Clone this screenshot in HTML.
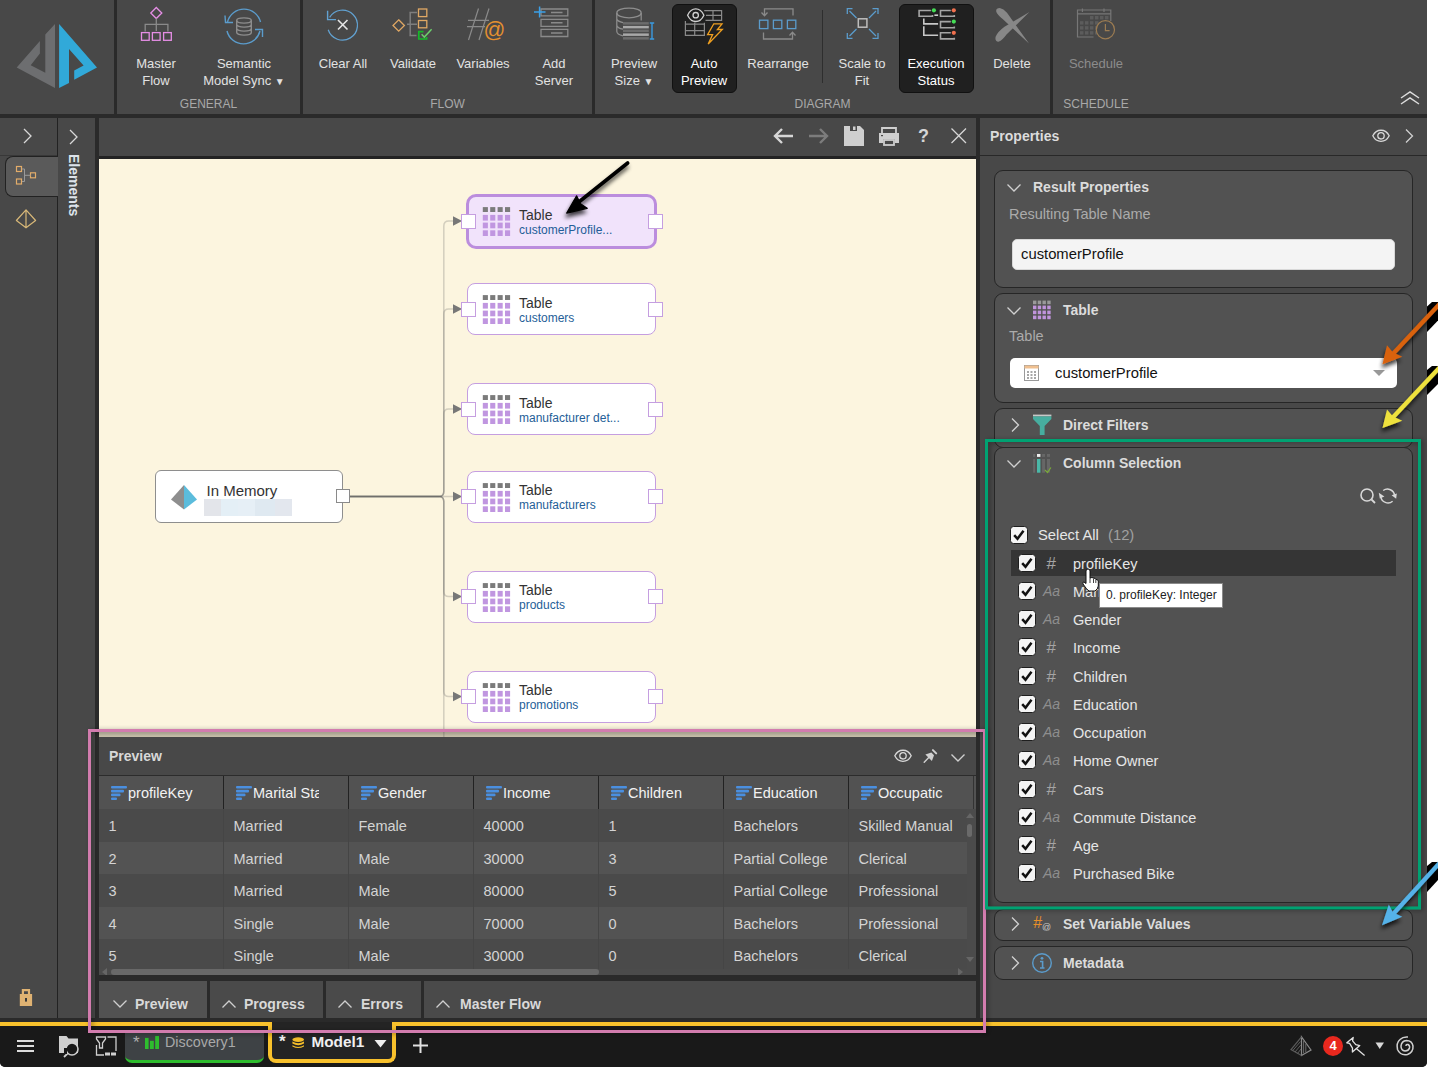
<!DOCTYPE html>
<html><head><meta charset="utf-8">
<style>
*{margin:0;padding:0;box-sizing:border-box}
html,body{width:1438px;height:1067px;overflow:hidden;background:#fff;font-family:"Liberation Sans",sans-serif}
.a{position:absolute}
svg{position:absolute;overflow:visible}
.rb{position:absolute;color:#e2e2e2;font-size:13px;line-height:17px;text-align:center;white-space:nowrap}
.gl{position:absolute;color:#a9a9a9;font-size:12px;line-height:14px;white-space:nowrap;text-align:center}
.box{position:absolute;left:994px;width:419px;background:#525252;border:1px solid #262626;border-radius:9px}
.bt{position:absolute;left:68px;font-weight:bold;font-size:14px;color:#dcdcdc;white-space:nowrap;line-height:16px}
.chev{position:absolute}
.cb{position:absolute;width:18px;height:18px;background:#f4f4f4;border-radius:3.5px;border:1px solid #1e1e1e}
.row{position:absolute;left:0;width:877px;height:33px}
.cell{position:absolute;font-size:14.5px;color:#d4d4d4;white-space:nowrap;line-height:18px}
.hc{position:absolute;font-size:14.5px;color:#f2f2f2;white-space:nowrap;line-height:18px}
.col{position:absolute;font-size:14.5px;color:#e6e6e6;white-space:nowrap;line-height:20px;left:1073px}
.ty{position:absolute;font-size:13px;color:#9a9a9a;white-space:nowrap;font-style:italic;left:1044px;line-height:16px}
.node{position:absolute;left:467px;width:189px;height:52px;background:#fff;border:1px solid #c59ee0;border-radius:8px}
.nt{position:absolute;left:52px;top:9px;font-size:14px;color:#333;line-height:16px;white-space:nowrap}
.ns{position:absolute;left:52px;top:24px;font-size:12px;color:#235f98;line-height:14px;white-space:nowrap}
.port{position:absolute;width:15px;height:15px;background:#fff;border:1px solid #c59ee0}
.tab{position:absolute;top:981px;height:37px;background:#4a4a4a;font-size:14px;font-weight:bold;color:#d9d9d9;line-height:46px;white-space:nowrap}
</style></head><body>
<!-- app frame -->
<div class="a" style="left:0;top:0;width:1427px;height:1067px;background:#2a2a2a;border-radius:0 0 5px 5px;overflow:hidden">
  <!-- ribbon -->
  <div class="a" style="left:0;top:0;width:1427px;height:114px;background:#484848"></div>
  <div class="a" style="left:114px;top:0;width:3px;height:114px;background:#2a2a2a"></div>
  <div class="a" style="left:300px;top:0;width:3px;height:114px;background:#2a2a2a"></div>
  <div class="a" style="left:592px;top:0;width:3px;height:114px;background:#2a2a2a"></div>
  <div class="a" style="left:1050px;top:0;width:3px;height:114px;background:#2a2a2a"></div>

  <!-- logo -->
  <svg width="120" height="114" style="left:0;top:0">
    <polygon points="55,24 45.3,34.5 45.3,72.8 30.7,65.2 39.9,53.4 39.9,41 16.7,67.6 55,88" fill="#6d6e70"/>
    <polygon points="59.1,24 97,67.6 74.2,79.8 74.2,70.6 83.6,65.4 69,49.1 69,83 59.1,88" fill="#31a9d9"/>
  </svg>
  <!-- Master Flow icon -->
  <svg width="40" height="45" style="left:136px;top:0">
    <g transform="translate(-136,0)">
    <polygon points="156.3,7.5 161.8,13 156.3,18.5 150.8,13" fill="none" stroke="#e68ee6" stroke-width="1.3"/>
    <path d="M156.3 18.5V31 M145.2 31.5V24.4H167.9V31.5" fill="none" stroke="#8a8a8a" stroke-width="1.3"/>
    <rect x="141.5" y="32.6" width="7.7" height="7.7" fill="none" stroke="#e68ee6" stroke-width="1.3"/>
    <rect x="152.4" y="32.6" width="7.7" height="7.7" fill="none" stroke="#e68ee6" stroke-width="1.3"/>
    <rect x="163.6" y="32.6" width="7.7" height="7.7" fill="none" stroke="#e68ee6" stroke-width="1.3"/>
    </g>
  </svg>
  <div class="rb" style="left:116px;width:80px;top:55px">Master<br>Flow</div>
  <!-- Semantic Model Sync icon -->
  <svg width="60" height="50" style="left:214px;top:0">
    <g transform="translate(-214,0)" fill="none" stroke-width="1.4">
    <path d="M227.5 22 A17 17 0 0 1 260.5 22" stroke="#5b9ccc"/>
    <path d="M260 31 A17 17 0 0 1 227 31" stroke="#5b9ccc"/>
    <path d="M225 15.5 L225.5 22.5 L233 22.5" stroke="#5b9ccc"/>
    <path d="M262.5 37 L262.5 29.5 L255 29.5" stroke="#5b9ccc"/>
    <ellipse cx="244" cy="20.5" rx="7.3" ry="2.6" stroke="#8d8d8d"/>
    <path d="M236.7 20.5V32.5 A7.3 2.6 0 0 0 251.3 32.5 V20.5 M236.7 24.5 A7.3 2.6 0 0 0 251.3 24.5 M236.7 28.5 A7.3 2.6 0 0 0 251.3 28.5" stroke="#8d8d8d"/>
    </g>
  </svg>
  <div class="rb" style="left:194px;width:100px;top:55px">Semantic<br>Model Sync <span style="font-size:10px">&#9660;</span></div>
  <div class="gl" style="left:117px;width:183px;top:97px">GENERAL</div>

  <!-- Clear All -->
  <svg width="40" height="45" style="left:322px;top:0">
    <g transform="translate(-322,0)" fill="none">
    <path d="M329.6 17.4 A15 15 0 1 1 328.2 29.8" stroke="#62a2d2" stroke-width="1.25"/>
    <path d="M327.6 10.8 V19.6 H336" stroke="#62a2d2" stroke-width="1.4"/>
    <path d="M338 20 L347.5 29.5 M347.5 20 L338 29.5" stroke="#e6e6e6" stroke-width="1.6"/>
    </g>
  </svg>
  <div class="rb" style="left:303px;width:80px;top:55px">Clear All</div>
  <!-- Validate -->
  <svg width="50" height="45" style="left:390px;top:0">
    <g transform="translate(-390,0)" fill="none" stroke-width="1.3">
    <polygon points="398.7,19.8 404.4,25.5 398.7,31.2 393,25.5" stroke="#e0a864"/>
    <path d="M407 24.2 H417 M410.2 12.5 V35.5 M409.4 12.5 H417 M409.4 35.5 H416.5" stroke="#7e7e7e" stroke-width="1.5"/>
    <rect x="418.5" y="9" width="8.3" height="7.6" stroke="#e0a864"/>
    <rect x="418.5" y="20.5" width="8.3" height="7.3" stroke="#e0a864"/>
    <path d="M423.5 31.6 H418.8 V39 H426.6 V37" stroke="#16b82a" stroke-width="1.7"/>
    <path d="M421.6 34.2 L424.3 37.1 L431.6 29.2" stroke="#6cd06c" stroke-width="1.4"/>
    </g>
  </svg>
  <div class="rb" style="left:373px;width:80px;top:55px">Validate</div>
  <!-- Variables -->
  <svg width="50" height="45" style="left:460px;top:0">
    <g transform="translate(-460,0)" fill="none">
    <path d="M478.5 8.5 L468.5 40 M489 8.5 L479 40 M468 20.4 H489 M467 26.6 H485" stroke="#8a8a8a" stroke-width="1.2"/>
</g>
  </svg>
  <div class="a" style="left:483.5px;top:17px;font-size:21.5px;color:#e39030;line-height:26px">@</div>
  <div class="rb" style="left:443px;width:80px;top:55px">Variables</div>
  <!-- Add Server -->
  <svg width="40" height="45" style="left:532px;top:0">
    <g transform="translate(-532,0)" fill="none" stroke-width="1.3">
    <path d="M541 9 H567.8 V15.8 H541 Z M541 19.3 H567.8 V26.3 H541 Z M541 29.3 H567.8 V36.5 H541 Z" stroke="#8a8a8a"/>
    <path d="M551 12.5 H562.5 M551 22.8 H562.5 M551 33 H562.5" stroke="#8a8a8a" stroke-width="1.6"/>
    <path d="M539.6 6.5 V17.5 M534 12 H545.5" stroke="#3aa0e8" stroke-width="1.5"/>
    </g>
  </svg>
  <div class="rb" style="left:514px;width:80px;top:55px">Add<br>Server</div>
  <div class="gl" style="left:303px;width:289px;top:97px">FLOW</div>

  <!-- Preview Size -->
  <svg width="50" height="45" style="left:612px;top:0">
    <g transform="translate(-612,0)" fill="none" stroke-width="1.25">
    <ellipse cx="629" cy="12.9" rx="12.2" ry="4.9" stroke="#8e8e8e"/>
    <path d="M616.8 12.9 V31.5 Q617 34.5 623 35.8 M616.8 19 Q617.5 21.5 623 22.6 M616.8 25.5 Q617.5 28 623 29.2 M641.2 12.9 V20.6" stroke="#8e8e8e"/>
    <rect x="623" y="22.1" width="25.8" height="2.5" fill="#6c6c6c" stroke="none"/>
    <rect x="623" y="25.9" width="25.8" height="2.5" fill="#a8a8a8" stroke="none"/>
    <rect x="623" y="29.6" width="25.8" height="2.5" fill="#6c6c6c" stroke="none"/>
    <rect x="623" y="33.4" width="25.8" height="2.5" fill="#a8a8a8" stroke="none"/>
    <rect x="623" y="37.1" width="25.8" height="2.5" fill="#6c6c6c" stroke="none"/>
    <path d="M652 23 V39 M649.8 23 H654.2 M649.8 39 H654.2" stroke="#3a9ae0" stroke-width="1.4"/>
    </g>
  </svg>
  <div class="rb" style="left:594px;width:80px;top:55px">Preview<br>Size <span style="font-size:10px">&#9660;</span></div>
  <!-- Auto Preview (active) -->
  <div class="a" style="left:672px;top:4px;width:65px;height:89px;background:#202020;border:1px solid #111;border-radius:6px"></div>
<svg width="50" height="48" style="left:680px;top:0">
    <g transform="translate(-680,0)" fill="none" stroke-width="1.2">
    <path d="M704.2 10.6 H721.6 V20.3 H705.5 M713 10.6 V20.3 M706 15.4 H721.6" stroke="#8a8a8a"/>
    <path d="M685.4 21 V35.4 H704.4 V22.8 M685.4 24.2 H704.4 M685.4 30.6 H704.4 M694.7 22.5 V35.4" stroke="#8a8a8a"/>
    <path d="M687.6 15.2 C691.5 6.8 700 6.8 703.9 15.2 C700 23.6 691.5 23.6 687.6 15.2 Z" stroke="#d2d2d2" stroke-width="1.3" fill="#202020"/>
    <circle cx="695.7" cy="15.2" r="2.7" stroke="#d2d2d2" stroke-width="1.3"/>
    <path d="M713.8 23.8 H722 L717.4 29.5 H722.3 L708.2 44 L712.6 34.6 H707.6 Z" stroke="#f0a020" stroke-width="1.3" stroke-linejoin="miter"/>
    </g>
  </svg>
  <div class="rb" style="left:664px;width:80px;top:55px;color:#fff">Auto<br>Preview</div>
  <!-- Rearrange -->
  <svg width="50" height="45" style="left:754px;top:0">
    <g transform="translate(-754,0)" fill="none" stroke-width="1.3">
    <rect x="759.5" y="20.2" width="8.4" height="8.4" stroke="#5b9ccc"/>
    <rect x="773.4" y="20.2" width="8.4" height="8.4" stroke="#5b9ccc"/>
    <rect x="787.4" y="20.2" width="8.4" height="8.4" stroke="#5b9ccc"/>
    <path d="M793 15.5 V8.8 H764.5 V15.5 M761.5 12.5 L764.5 15.8 L767.5 12.5" stroke="#8a8a8a"/>
    <path d="M763.5 32.5 V39 H792.5 V32.5 M789.5 35.5 L792.5 32.3 L795.5 35.5" stroke="#8a8a8a"/>
    </g>
  </svg>
  <div class="rb" style="left:738px;width:80px;top:55px">Rearrange</div>
  <div class="a" style="left:822px;top:10px;width:1px;height:73px;background:#2e2e2e"></div>
  <!-- Scale to Fit -->
  <svg width="40" height="45" style="left:842px;top:0">
    <g transform="translate(-842,0)" fill="none" stroke-width="1.3">
    <path d="M847.3 14 V8.6 H852.5 M872.5 8.6 H878 V14 M878 33 V38.4 H872.5 M852.5 38.4 H847.3 V33" stroke="#5b9ccc"/>
    <path d="M849.5 11 L856.5 18 M876 11 L869 18 M849.5 36 L856.5 29 M876 36 L869 29" stroke="#5b9ccc"/>
    <rect x="858.3" y="18.8" width="8.6" height="8.4" stroke="#bdbdbd" stroke-width="1.5"/>
    </g>
  </svg>
  <div class="rb" style="left:822px;width:80px;top:55px">Scale to<br>Fit</div>
  <!-- Execution Status (active) -->
  <div class="a" style="left:899px;top:4px;width:75px;height:89px;background:#202020;border:1px solid #111;border-radius:6px"></div>
  <svg width="50" height="45" style="left:915px;top:0">
    <g transform="translate(-915,0)" fill="none" stroke-width="1.6" stroke="#a5a5a5">
    <path d="M930.9 10.5 H919.1 V16.2 H932.5 V15"/>
    <path d="M934.4 15.2 H938.1" stroke="#d0d0d0"/>
    <path d="M950.8 10.5 H940.5 V16.2 H954.3 V15"/>
    <path d="M950.8 21.6 H940.5 V27.7 H954.3 V26.5"/>
    <path d="M950.8 32.8 H940.5 V38.9 H954.3 V37.7"/>
    <path d="M923.8 18.5 V23.9 H938.1 M923.8 26.3 V35.2 H938.1" stroke="#c8c8c8"/>
    <circle cx="933.9" cy="10.3" r="2.1" fill="#44dd55" stroke="none"/>
    <circle cx="953.8" cy="10.3" r="2.1" fill="#f0704e" stroke="none"/>
    <circle cx="953.8" cy="21.6" r="2.1" fill="#44dd55" stroke="none"/>
    <circle cx="953.8" cy="32.8" r="2.1" fill="#f0704e" stroke="none"/>
    </g>
  </svg>
  <div class="rb" style="left:896px;width:80px;top:55px;color:#fff">Execution<br>Status</div>
  <!-- Delete -->
  <svg width="40" height="50" style="left:992px;top:0">
    <g transform="translate(-992,0)" fill="#878787">
    <path d="M996.3 11.8 Q995.5 8 999.8 8 Q1003.5 8.6 1007 12.8 L1029 43.6 L1003.2 19.6 Q997 14.6 996.3 11.8 Z"/>
    <path d="M1029.4 12 L1004.5 26.8 Q997.6 31.8 995.6 36.8 Q994.6 42 999 41.6 Q1002 40.8 1006.5 34.6 Z"/>
    </g>
  </svg>
  <div class="rb" style="left:972px;width:80px;top:55px">Delete</div>
  <div class="gl" style="left:595px;width:455px;top:97px">DIAGRAM</div>
  <!-- Schedule -->
  <svg width="45" height="45" style="left:1072px;top:0">
    <g transform="translate(-1072,0)" fill="none">
    <path d="M1093.5 37 H1077.5 V10 H1110.8 V21" stroke="#777" stroke-width="1.2"/>
    <path d="M1077.5 13.8 H1110.8" stroke="#777" stroke-width="1.2"/>
    <path d="M1082.4 8.4 V12 M1104 8.4 V12" stroke="#777" stroke-width="1.2"/>
    <rect x="1090.0" y="16" width="3.4" height="3.4" fill="#5c5c5c"/>
    <rect x="1095.0" y="16" width="3.4" height="3.4" fill="#5c5c5c"/>
    <rect x="1100.0" y="16" width="3.4" height="3.4" fill="#5c5c5c"/>
    <rect x="1105.0" y="16" width="3.4" height="3.4" fill="#5c5c5c"/>
    <rect x="1080.0" y="21.2" width="3.4" height="3.4" fill="#5c5c5c"/>
    <rect x="1085.0" y="21.2" width="3.4" height="3.4" fill="#5c5c5c"/>
    <rect x="1090.0" y="21.2" width="3.4" height="3.4" fill="#5c5c5c"/>
    <rect x="1095.0" y="21.2" width="3.4" height="3.4" fill="#5c5c5c"/>
    <rect x="1080.0" y="26.2" width="3.4" height="3.4" fill="#5c5c5c"/>
    <rect x="1085.0" y="26.2" width="3.4" height="3.4" fill="#5c5c5c"/>
    <rect x="1090.0" y="26.2" width="3.4" height="3.4" fill="#5c5c5c"/>
    <rect x="1095.0" y="26.2" width="3.4" height="3.4" fill="#5c5c5c"/>
    <rect x="1080.0" y="31.2" width="3.4" height="3.4" fill="#5c5c5c"/>
    <rect x="1085.0" y="31.2" width="3.4" height="3.4" fill="#5c5c5c"/>
    <rect x="1090.0" y="31.2" width="3.4" height="3.4" fill="#5c5c5c"/>
    <rect x="1095.0" y="31.2" width="3.4" height="3.4" fill="#5c5c5c"/>
    <circle cx="1105.4" cy="29.7" r="9.1" stroke="#9c7c52" stroke-width="1.2" fill="#484848"/>
    <path d="M1105.4 24 V30.6 H1109.6" stroke="#9c7c52" stroke-width="1.2"/>
    </g>
  </svg>
  <div class="rb" style="left:1056px;width:80px;top:55px;color:#8c8c8c">Schedule</div>
  <div class="gl" style="left:1053px;width:86px;top:97px">SCHEDULE</div>
  <!-- collapse -->
  <svg width="24" height="16" style="left:1399px;top:90px">
    <path d="M2 8 L11 2 L20 8 M2 14 L11 8 L20 14" fill="none" stroke="#dcdcdc" stroke-width="1.5"/>
  </svg>
  <!-- band -->
  <div class="a" style="left:1180px;top:118px;width:47px;height:1px;border-top:1px dotted #a0a0a0"></div>

  <!-- left sidebar -->
  <div class="a" style="left:0;top:118px;width:57px;height:900px;background:#484848"></div>
  <div class="a" style="left:58px;top:118px;width:37px;height:900px;background:#484848"></div>
  <!-- canvas toolbar -->
  <div class="a" style="left:99px;top:118px;width:877px;height:38px;background:#484848"></div>
  <!-- canvas -->
  <div class="a" style="left:99px;top:159px;width:877px;height:573px;background:#fcf5df"></div>
  <div class="a" style="left:99px;top:732px;width:877px;height:5px;background:#cac2ac"></div>

  <!-- left sidebar details -->
  <div class="a" style="left:57px;top:118px;width:1px;height:900px;background:#222"></div>
  <svg width="20" height="20" style="left:18px;top:126px"><path d="M6 3 L13 10 L6 17" fill="none" stroke="#d8d8d8" stroke-width="1.3"/></svg>
  <div class="a" style="left:0;top:155px;width:57px;height:1px;background:#383838"></div>
  <div class="a" style="left:5px;top:156px;width:53px;height:41px;background:#5a5a5a;border-radius:8px 0 0 8px;border:1px solid #222;border-right:none"></div>
  <svg width="30" height="30" style="left:11px;top:160px" viewBox="0 0 30 30">
    <g fill="none" stroke="#e2ac6a" stroke-width="1.2"><rect x="5.5" y="6.5" width="5" height="5"/><rect x="5.5" y="19" width="5" height="5"/><rect x="19.5" y="12.8" width="5" height="5"/></g>
    <path d="M11 9 H13.5 V21.5 H11 M13.5 15.3 H19.5" fill="none" stroke="#9a9a9a" stroke-width="1"/>
  </svg>
  <svg width="24" height="24" style="left:14px;top:207px" viewBox="0 0 24 24">
    <path d="M12 2.8 L21.6 13.5 L12 20.8 L2.4 13.5 Z M12 2.8 V20.8" fill="none" stroke="#d8b878" stroke-width="1.2" stroke-linejoin="round"/>
  </svg>
  <svg width="20" height="22" style="left:15px;top:986px" viewBox="0 0 20 22"><path d="M7.9 8.5 V4.2 H14 V8.5" fill="none" stroke="#dfb272" stroke-width="2.2"/><rect x="4.8" y="8" width="12.3" height="12" fill="#dfb272"/><rect x="10" y="12" width="2" height="3.6" fill="#3a3a3a"/></svg>
  <svg width="20" height="20" style="left:64px;top:127px"><path d="M6 3 L13 10 L6 17" fill="none" stroke="#d8d8d8" stroke-width="1.3"/></svg>
  <div class="a" style="left:58px;top:154px;width:62px;height:30px;transform-origin:0 0;transform:translate(30.5px,0) rotate(90deg);font-size:14px;font-weight:bold;color:#dde3ea;line-height:30px;letter-spacing:0px">Elements</div>
  <!-- canvas toolbar icons -->
  <svg width="220" height="38" style="left:760px;top:118px">
    <g transform="translate(-760,-118)">
    <path d="M775 136 H793 M782 129 L775 136 L782 143" fill="none" stroke="#d6d6d6" stroke-width="2.4"/>
    <path d="M809 136 H827 M820 129 L827 136 L820 143" fill="none" stroke="#7c7c7c" stroke-width="2.4"/>
    <path d="M844 126 H860 L864 130 V146 H844 Z" fill="#cfcfcf"/>
    <rect x="850" y="126" width="7" height="5" fill="#484848"/><rect x="853" y="126.5" width="2.5" height="3.5" fill="#cfcfcf"/>
    <path d="M882 135 V128 H896 V135" fill="none" stroke="#cfcfcf" stroke-width="1.8"/>
    <path d="M879 133 H899 V143 H895 V139 H883 V143 H879 Z" fill="#cfcfcf"/>
    <rect x="884" y="140" width="10" height="5" fill="none" stroke="#cfcfcf" stroke-width="1.8"/>
    <rect x="881" y="135" width="2" height="1.2" fill="#484848"/>
    </g>
  </svg>
  <div class="a" style="left:918px;top:126px;font-size:18px;font-weight:bold;color:#d6d6d6;line-height:20px">?</div>
  <svg width="20" height="20" style="left:949px;top:126px"><path d="M2.5 2.5 L17 17 M17 2.5 L2.5 17" stroke="#d6d6d6" stroke-width="1.3"/></svg>
  <div class="a" style="left:99px;top:156px;width:877px;height:3px;background:#232323"></div>

  <!-- canvas content -->
  <svg width="877" height="578" style="left:99px;top:159px">
    <g transform="translate(-99,-159)">
    <path d="M350 496.5 H438.8 Q443.8 496.5 443.8 491.5 V226 Q443.8 221 448.8 221 H455" stroke="#5a5a5a" stroke-opacity="0.25" stroke-width="1.5" fill="none"/>
    <polygon points="453,216.2 462.2,221.0 453,225.8" fill="#777"/>
    <path d="M350 496.5 H438.8 Q443.8 496.5 443.8 491.5 V314 Q443.8 309 448.8 309 H455" stroke="#5a5a5a" stroke-opacity="0.25" stroke-width="1.5" fill="none"/>
    <polygon points="453,304.2 462.2,309.0 453,313.8" fill="#777"/>
    <path d="M350 496.5 H438.8 Q443.8 496.5 443.8 491.5 V414 Q443.8 409 448.8 409 H455" stroke="#5a5a5a" stroke-opacity="0.25" stroke-width="1.5" fill="none"/>
    <polygon points="453,404.2 462.2,409.0 453,413.8" fill="#777"/>
    <path d="M350 496.5 H455" stroke="#5a5a5a" stroke-opacity="0.25" stroke-width="1.5" fill="none"/>
    <polygon points="453,491.7 462.2,496.5 453,501.3" fill="#777"/>
    <path d="M350 496.5 H438.8 Q443.8 496.5 443.8 501.5 V591.5 Q443.8 596.5 448.8 596.5 H455" stroke="#5a5a5a" stroke-opacity="0.25" stroke-width="1.5" fill="none"/>
    <polygon points="453,591.7 462.2,596.5 453,601.3" fill="#777"/>
    <path d="M350 496.5 H438.8 Q443.8 496.5 443.8 501.5 V691.5 Q443.8 696.5 448.8 696.5 H455" stroke="#5a5a5a" stroke-opacity="0.25" stroke-width="1.5" fill="none"/>
    <polygon points="453,691.7 462.2,696.5 453,701.3" fill="#777"/>
    <path d="M350 496.5 H438.8 Q443.8 496.5 443.8 501.5 V740" stroke="#5a5a5a" stroke-opacity="0.25" stroke-width="1.5" fill="none"/>
    </g>
  </svg>
  <!-- In Memory node -->
  <div class="a" style="left:155px;top:470px;width:188px;height:53px;background:#fff;border:1px solid #8e8e8e;border-radius:6px"></div>
  <svg width="30" height="30" style="left:169px;top:482px"><polygon points="15,3 15,27.5 2,17.5" fill="#8e8e8e"/><polygon points="15,3 28,17.5 15,27.5" fill="#5bbcdc"/></svg>
  <div class="a" style="left:206.5px;top:482px;font-size:15px;color:#333;line-height:18px;white-space:nowrap">In Memory</div>
  <div class="a" style="left:204px;top:498.5px;width:17px;height:17px;background:#e3e5ea"></div>
  <div class="a" style="left:221px;top:498.5px;width:17px;height:17px;background:#e4eff6"></div>
  <div class="a" style="left:238px;top:498.5px;width:17px;height:17px;background:#e6eff6"></div>
  <div class="a" style="left:255px;top:498.5px;width:20px;height:17px;background:#dfe9f1"></div>
  <div class="a" style="left:275px;top:498.5px;width:17px;height:17px;background:#e3e7ee"></div>
  <div class="a" style="left:336px;top:489px;width:14px;height:14px;background:#fff;border:1px solid #8a8a8a"></div>
  <div class="node" style="left:466px;width:191px;top:194px;height:54.5px;border:3.6px solid #bb8ddd;background:#f1e3fb;border-radius:10px"></div>
  <svg width="30" height="30" style="left:482px;top:207.0px"><g transform="translate(-482,-207.0)"><rect x="482.8" y="207.1" width="5.1" height="4.9" fill="#7b7b7b"/><rect x="490.2" y="207.1" width="5.1" height="4.9" fill="#7b7b7b"/><rect x="497.6" y="207.1" width="5.1" height="4.9" fill="#7b7b7b"/><rect x="505.0" y="207.1" width="5.1" height="4.9" fill="#7b7b7b"/><rect x="482.8" y="214.9" width="5.1" height="5.7" fill="#c096e0"/><rect x="482.8" y="222.6" width="5.1" height="5.7" fill="#c096e0"/><rect x="482.8" y="230.3" width="5.1" height="5.7" fill="#c096e0"/><rect x="490.2" y="214.9" width="5.1" height="5.7" fill="#c096e0"/><rect x="490.2" y="222.6" width="5.1" height="5.7" fill="#c096e0"/><rect x="490.2" y="230.3" width="5.1" height="5.7" fill="#c096e0"/><rect x="497.6" y="214.9" width="5.1" height="5.7" fill="#c096e0"/><rect x="497.6" y="222.6" width="5.1" height="5.7" fill="#c096e0"/><rect x="497.6" y="230.3" width="5.1" height="5.7" fill="#c096e0"/><rect x="505.0" y="214.9" width="5.1" height="5.7" fill="#c096e0"/><rect x="505.0" y="222.6" width="5.1" height="5.7" fill="#c096e0"/><rect x="505.0" y="230.3" width="5.1" height="5.7" fill="#c096e0"/></g></svg>
  <div class="a" style="left:519px;top:206.5px;font-size:14px;color:#333;line-height:16px;white-space:nowrap">Table</div>
  <div class="a" style="left:519px;top:222.5px;font-size:12px;color:#245e98;line-height:14px;white-space:nowrap">customerProfile...</div>
  <div class="port" style="left:461px;top:213.7px"></div>
  <div class="port" style="left:648px;top:213.7px"></div>
  <div class="node" style="top:283px;height:52px"></div>
  <svg width="30" height="30" style="left:482px;top:295.0px"><g transform="translate(-482,-295.0)"><rect x="482.8" y="295.1" width="5.1" height="4.9" fill="#7b7b7b"/><rect x="490.2" y="295.1" width="5.1" height="4.9" fill="#7b7b7b"/><rect x="497.6" y="295.1" width="5.1" height="4.9" fill="#7b7b7b"/><rect x="505.0" y="295.1" width="5.1" height="4.9" fill="#7b7b7b"/><rect x="482.8" y="302.9" width="5.1" height="5.7" fill="#c096e0"/><rect x="482.8" y="310.6" width="5.1" height="5.7" fill="#c096e0"/><rect x="482.8" y="318.3" width="5.1" height="5.7" fill="#c096e0"/><rect x="490.2" y="302.9" width="5.1" height="5.7" fill="#c096e0"/><rect x="490.2" y="310.6" width="5.1" height="5.7" fill="#c096e0"/><rect x="490.2" y="318.3" width="5.1" height="5.7" fill="#c096e0"/><rect x="497.6" y="302.9" width="5.1" height="5.7" fill="#c096e0"/><rect x="497.6" y="310.6" width="5.1" height="5.7" fill="#c096e0"/><rect x="497.6" y="318.3" width="5.1" height="5.7" fill="#c096e0"/><rect x="505.0" y="302.9" width="5.1" height="5.7" fill="#c096e0"/><rect x="505.0" y="310.6" width="5.1" height="5.7" fill="#c096e0"/><rect x="505.0" y="318.3" width="5.1" height="5.7" fill="#c096e0"/></g></svg>
  <div class="a" style="left:519px;top:294.5px;font-size:14px;color:#333;line-height:16px;white-space:nowrap">Table</div>
  <div class="a" style="left:519px;top:310.5px;font-size:12px;color:#245e98;line-height:14px;white-space:nowrap">customers</div>
  <div class="port" style="left:461px;top:301.7px"></div>
  <div class="port" style="left:648px;top:301.7px"></div>
  <div class="node" style="top:383px;height:52px"></div>
  <svg width="30" height="30" style="left:482px;top:395.0px"><g transform="translate(-482,-395.0)"><rect x="482.8" y="395.1" width="5.1" height="4.9" fill="#7b7b7b"/><rect x="490.2" y="395.1" width="5.1" height="4.9" fill="#7b7b7b"/><rect x="497.6" y="395.1" width="5.1" height="4.9" fill="#7b7b7b"/><rect x="505.0" y="395.1" width="5.1" height="4.9" fill="#7b7b7b"/><rect x="482.8" y="402.9" width="5.1" height="5.7" fill="#c096e0"/><rect x="482.8" y="410.6" width="5.1" height="5.7" fill="#c096e0"/><rect x="482.8" y="418.3" width="5.1" height="5.7" fill="#c096e0"/><rect x="490.2" y="402.9" width="5.1" height="5.7" fill="#c096e0"/><rect x="490.2" y="410.6" width="5.1" height="5.7" fill="#c096e0"/><rect x="490.2" y="418.3" width="5.1" height="5.7" fill="#c096e0"/><rect x="497.6" y="402.9" width="5.1" height="5.7" fill="#c096e0"/><rect x="497.6" y="410.6" width="5.1" height="5.7" fill="#c096e0"/><rect x="497.6" y="418.3" width="5.1" height="5.7" fill="#c096e0"/><rect x="505.0" y="402.9" width="5.1" height="5.7" fill="#c096e0"/><rect x="505.0" y="410.6" width="5.1" height="5.7" fill="#c096e0"/><rect x="505.0" y="418.3" width="5.1" height="5.7" fill="#c096e0"/></g></svg>
  <div class="a" style="left:519px;top:394.5px;font-size:14px;color:#333;line-height:16px;white-space:nowrap">Table</div>
  <div class="a" style="left:519px;top:410.5px;font-size:12px;color:#245e98;line-height:14px;white-space:nowrap">manufacturer det...</div>
  <div class="port" style="left:461px;top:401.7px"></div>
  <div class="port" style="left:648px;top:401.7px"></div>
  <div class="node" style="top:470.5px;height:52px"></div>
  <svg width="30" height="30" style="left:482px;top:482.5px"><g transform="translate(-482,-482.5)"><rect x="482.8" y="482.6" width="5.1" height="4.9" fill="#7b7b7b"/><rect x="490.2" y="482.6" width="5.1" height="4.9" fill="#7b7b7b"/><rect x="497.6" y="482.6" width="5.1" height="4.9" fill="#7b7b7b"/><rect x="505.0" y="482.6" width="5.1" height="4.9" fill="#7b7b7b"/><rect x="482.8" y="490.4" width="5.1" height="5.7" fill="#c096e0"/><rect x="482.8" y="498.1" width="5.1" height="5.7" fill="#c096e0"/><rect x="482.8" y="505.8" width="5.1" height="5.7" fill="#c096e0"/><rect x="490.2" y="490.4" width="5.1" height="5.7" fill="#c096e0"/><rect x="490.2" y="498.1" width="5.1" height="5.7" fill="#c096e0"/><rect x="490.2" y="505.8" width="5.1" height="5.7" fill="#c096e0"/><rect x="497.6" y="490.4" width="5.1" height="5.7" fill="#c096e0"/><rect x="497.6" y="498.1" width="5.1" height="5.7" fill="#c096e0"/><rect x="497.6" y="505.8" width="5.1" height="5.7" fill="#c096e0"/><rect x="505.0" y="490.4" width="5.1" height="5.7" fill="#c096e0"/><rect x="505.0" y="498.1" width="5.1" height="5.7" fill="#c096e0"/><rect x="505.0" y="505.8" width="5.1" height="5.7" fill="#c096e0"/></g></svg>
  <div class="a" style="left:519px;top:482.0px;font-size:14px;color:#333;line-height:16px;white-space:nowrap">Table</div>
  <div class="a" style="left:519px;top:498.0px;font-size:12px;color:#245e98;line-height:14px;white-space:nowrap">manufacturers</div>
  <div class="port" style="left:461px;top:489.2px"></div>
  <div class="port" style="left:648px;top:489.2px"></div>
  <div class="node" style="top:570.5px;height:52px"></div>
  <svg width="30" height="30" style="left:482px;top:582.5px"><g transform="translate(-482,-582.5)"><rect x="482.8" y="582.6" width="5.1" height="4.9" fill="#7b7b7b"/><rect x="490.2" y="582.6" width="5.1" height="4.9" fill="#7b7b7b"/><rect x="497.6" y="582.6" width="5.1" height="4.9" fill="#7b7b7b"/><rect x="505.0" y="582.6" width="5.1" height="4.9" fill="#7b7b7b"/><rect x="482.8" y="590.4" width="5.1" height="5.7" fill="#c096e0"/><rect x="482.8" y="598.1" width="5.1" height="5.7" fill="#c096e0"/><rect x="482.8" y="605.8" width="5.1" height="5.7" fill="#c096e0"/><rect x="490.2" y="590.4" width="5.1" height="5.7" fill="#c096e0"/><rect x="490.2" y="598.1" width="5.1" height="5.7" fill="#c096e0"/><rect x="490.2" y="605.8" width="5.1" height="5.7" fill="#c096e0"/><rect x="497.6" y="590.4" width="5.1" height="5.7" fill="#c096e0"/><rect x="497.6" y="598.1" width="5.1" height="5.7" fill="#c096e0"/><rect x="497.6" y="605.8" width="5.1" height="5.7" fill="#c096e0"/><rect x="505.0" y="590.4" width="5.1" height="5.7" fill="#c096e0"/><rect x="505.0" y="598.1" width="5.1" height="5.7" fill="#c096e0"/><rect x="505.0" y="605.8" width="5.1" height="5.7" fill="#c096e0"/></g></svg>
  <div class="a" style="left:519px;top:582.0px;font-size:14px;color:#333;line-height:16px;white-space:nowrap">Table</div>
  <div class="a" style="left:519px;top:598.0px;font-size:12px;color:#245e98;line-height:14px;white-space:nowrap">products</div>
  <div class="port" style="left:461px;top:589.2px"></div>
  <div class="port" style="left:648px;top:589.2px"></div>
  <div class="node" style="top:670.5px;height:52px"></div>
  <svg width="30" height="30" style="left:482px;top:682.5px"><g transform="translate(-482,-682.5)"><rect x="482.8" y="682.6" width="5.1" height="4.9" fill="#7b7b7b"/><rect x="490.2" y="682.6" width="5.1" height="4.9" fill="#7b7b7b"/><rect x="497.6" y="682.6" width="5.1" height="4.9" fill="#7b7b7b"/><rect x="505.0" y="682.6" width="5.1" height="4.9" fill="#7b7b7b"/><rect x="482.8" y="690.4" width="5.1" height="5.7" fill="#c096e0"/><rect x="482.8" y="698.1" width="5.1" height="5.7" fill="#c096e0"/><rect x="482.8" y="705.8" width="5.1" height="5.7" fill="#c096e0"/><rect x="490.2" y="690.4" width="5.1" height="5.7" fill="#c096e0"/><rect x="490.2" y="698.1" width="5.1" height="5.7" fill="#c096e0"/><rect x="490.2" y="705.8" width="5.1" height="5.7" fill="#c096e0"/><rect x="497.6" y="690.4" width="5.1" height="5.7" fill="#c096e0"/><rect x="497.6" y="698.1" width="5.1" height="5.7" fill="#c096e0"/><rect x="497.6" y="705.8" width="5.1" height="5.7" fill="#c096e0"/><rect x="505.0" y="690.4" width="5.1" height="5.7" fill="#c096e0"/><rect x="505.0" y="698.1" width="5.1" height="5.7" fill="#c096e0"/><rect x="505.0" y="705.8" width="5.1" height="5.7" fill="#c096e0"/></g></svg>
  <div class="a" style="left:519px;top:682.0px;font-size:14px;color:#333;line-height:16px;white-space:nowrap">Table</div>
  <div class="a" style="left:519px;top:698.0px;font-size:12px;color:#245e98;line-height:14px;white-space:nowrap">promotions</div>
  <div class="port" style="left:461px;top:689.2px"></div>
  <div class="port" style="left:648px;top:689.2px"></div>
  <!-- properties -->
  <div class="a" style="left:980px;top:118px;width:447px;height:900px;background:#484848"></div>
  <!-- properties -->
  <!-- properties header -->
  <div class="a" style="left:990px;top:128px;font-size:14px;font-weight:bold;color:#dcdcdc;line-height:16px">Properties</div>
  <svg width="20" height="16" style="left:1372px;top:129px"><path d="M0.8 6.8 C4.5 -0.6 13.5 -0.6 17.2 6.8 C13.5 14.2 4.5 14.2 0.8 6.8 Z" fill="none" stroke="#d8d8d8" stroke-width="1.3"/><circle cx="9" cy="6.8" r="3.2" fill="none" stroke="#d8d8d8" stroke-width="1.3"/></svg>
  <svg width="10" height="16" style="left:1404px;top:128px"><path d="M2 1.5 L8.5 8 L2 14.5" fill="none" stroke="#d0d0d0" stroke-width="1.3"/></svg>
  <div class="a" style="left:980px;top:154.5px;width:447px;height:1.5px;background:#282828"></div>
  <!-- Result Properties -->
  <div class="box" style="top:170px;height:118px"></div>
  <svg width="16" height="10" style="left:1006px;top:183px"><path d="M1.5 1.5 L8 8 L14.5 1.5" fill="none" stroke="#d0d0d0" stroke-width="1.3"/></svg>
  <div class="a" style="left:1033px;top:179px;font-size:14px;font-weight:bold;color:#dcdcdc;line-height:16px;white-space:nowrap">Result Properties</div>
  <div class="a" style="left:1009px;top:206px;font-size:14.5px;color:#ababab;line-height:17px;white-space:nowrap">Resulting Table Name</div>
  <div class="a" style="left:1012px;top:239px;width:383px;height:31px;background:#f4f4f4;border-radius:5px;border:1px solid #d8d8d8"></div>
  <div class="a" style="left:1021px;top:245px;font-size:14.8px;color:#111;line-height:18px;white-space:nowrap">customerProfile</div>
  <!-- Table -->
  <div class="box" style="top:293px;height:110px"></div>
  <svg width="16" height="10" style="left:1006px;top:306px"><path d="M1.5 1.5 L8 8 L14.5 1.5" fill="none" stroke="#d0d0d0" stroke-width="1.3"/></svg>
  <svg width="20" height="22" style="left:1032px;top:300px"><rect x="1.00" y="0.60" width="3.4" height="3.6" fill="#9a9a9a"/><rect x="1.00" y="5.60" width="3.4" height="3.6" fill="#c094dc"/><rect x="1.00" y="10.60" width="3.4" height="3.6" fill="#c094dc"/><rect x="1.00" y="15.60" width="3.4" height="3.6" fill="#c094dc"/><rect x="5.75" y="0.60" width="3.4" height="3.6" fill="#9a9a9a"/><rect x="5.75" y="5.60" width="3.4" height="3.6" fill="#c094dc"/><rect x="5.75" y="10.60" width="3.4" height="3.6" fill="#c094dc"/><rect x="5.75" y="15.60" width="3.4" height="3.6" fill="#c094dc"/><rect x="10.50" y="0.60" width="3.4" height="3.6" fill="#9a9a9a"/><rect x="10.50" y="5.60" width="3.4" height="3.6" fill="#c094dc"/><rect x="10.50" y="10.60" width="3.4" height="3.6" fill="#c094dc"/><rect x="10.50" y="15.60" width="3.4" height="3.6" fill="#c094dc"/><rect x="15.25" y="0.60" width="3.4" height="3.6" fill="#9a9a9a"/><rect x="15.25" y="5.60" width="3.4" height="3.6" fill="#c094dc"/><rect x="15.25" y="10.60" width="3.4" height="3.6" fill="#c094dc"/><rect x="15.25" y="15.60" width="3.4" height="3.6" fill="#c094dc"/></svg>
  <div class="a" style="left:1063px;top:302px;font-size:14px;font-weight:bold;color:#dcdcdc;line-height:16px">Table</div>
  <div class="a" style="left:1009px;top:328px;font-size:14.5px;color:#ababab;line-height:17px">Table</div>
  <div class="a" style="left:1010px;top:358px;width:387px;height:30px;background:#fff;border-radius:5px"></div>
  <svg width="18" height="18" style="left:1023px;top:364px"><rect x="1.5" y="1.5" width="14" height="15" fill="#fff" stroke="#9a9a9a" stroke-width="1"/><rect x="1.5" y="1.5" width="14" height="3" fill="#f0c090"/><path d="M4 8 h2 m1.5 0 h2 m1.5 0 h2 M4 11 h2 m1.5 0 h2 m1.5 0 h2 M4 14 h2 m1.5 0 h2 m1.5 0 h2" stroke="#8a8a8a" stroke-width="1.6"/></svg>
  <div class="a" style="left:1055px;top:364px;font-size:14.8px;color:#111;line-height:18px;white-space:nowrap">customerProfile</div>
  <svg width="14" height="8" style="left:1372px;top:369px"><polygon points="1,1 13,1 7,7" fill="#999"/></svg>
  <!-- Direct Filters -->
  <div class="box" style="top:408px;height:40px"></div>
  <svg width="10" height="16" style="left:1010px;top:417px"><path d="M2 1.5 L8.5 8 L2 14.5" fill="none" stroke="#d0d0d0" stroke-width="1.3"/></svg>
  <svg width="20" height="22" style="left:1032px;top:414px"><path d="M1 2.2 H19.4 V5 L12.6 12 V21 H7.8 V12 L1 5 Z" fill="#47ad9f"/><rect x="1" y="0.6" width="18.4" height="1.6" fill="#c8c8c8"/></svg>
  <div class="a" style="left:1063px;top:417px;font-size:14px;font-weight:bold;color:#dcdcdc;line-height:16px">Direct Filters</div>
  <!-- Column Selection -->
  <div class="box" style="top:447px;height:456px"></div>
  <svg width="16" height="10" style="left:1006px;top:459px"><path d="M1.5 1.5 L8 8 L14.5 1.5" fill="none" stroke="#d0d0d0" stroke-width="1.3"/></svg>
  <svg width="20" height="22" style="left:1032px;top:452px"><rect x="1.1" y="2" width="2.1" height="2.9" fill="#676767"/><rect x="1.1" y="7" width="2.1" height="13.7" fill="#676767"/><rect x="5" y="2" width="3.4" height="2.9" fill="#f0f0f0"/><rect x="5" y="7" width="3.4" height="13.7" fill="#4ab8a8"/><rect x="10.1" y="2" width="2.9" height="2.9" fill="#676767"/><rect x="10.1" y="7" width="2.9" height="13.7" fill="#676767"/><rect x="15" y="2" width="3" height="2.9" fill="#676767"/><rect x="15" y="7" width="3" height="13.7" fill="#676767"/><path d="M13 18 L15.5 20.5 L18.9 15.5" fill="none" stroke="#7aa83a" stroke-width="1.3"/></svg>
  <div class="a" style="left:1063px;top:455px;font-size:14px;font-weight:bold;color:#dcdcdc;line-height:16px;white-space:nowrap">Column Selection</div>
  <svg width="40" height="20" style="left:1358px;top:486px"><circle cx="9" cy="9" r="6" fill="none" stroke="#d8d8d8" stroke-width="1.6"/><path d="M13.5 13.5 L17 17" stroke="#d8d8d8" stroke-width="1.8"/>
    <path d="M25.2 4.5 A7.2 7.2 0 0 1 36.6 9.6 M34.6 15.2 A7.2 7.2 0 0 1 22.8 10.6" fill="none" stroke="#d8d8d8" stroke-width="1.4"/><polygon points="33.6,9.3 38.8,7.6 38.2,12.8" fill="#d8d8d8"/><polygon points="20.8,6.8 21.8,12.6 26.4,10.6" fill="#d8d8d8"/></svg>
  <div class="cb" style="left:1009.5px;top:525.5px"><svg width="17" height="17" style="left:-1px;top:-1px"><path d="M4.2 9.2 L7.5 12.8 L13.5 4.8" fill="none" stroke="#111" stroke-width="2.5"/></svg></div>
  <div class="a" style="left:1038px;top:526px;font-size:14.8px;color:#e6e6e6;line-height:18px;white-space:nowrap">Select All <span style="color:#a0a0a0;margin-left:5px">(12)</span></div>
  <div class="a" style="left:1011px;top:550px;width:385px;height:26px;background:#353535"></div>
  <div class="cb" style="left:1017.5px;top:554.0px"><svg width="17" height="17" style="left:-1px;top:-1px"><path d="M4.2 9.2 L7.5 12.8 L13.5 4.8" fill="none" stroke="#111" stroke-width="2.5"/></svg></div>
  <div class="a" style="left:1046.5px;top:554.5px;font-size:17px;color:#a5a5a5;line-height:18px">#</div>
  <div class="col" style="top:554px">profileKey</div>
  <div class="cb" style="left:1017.5px;top:582.0px"><svg width="17" height="17" style="left:-1px;top:-1px"><path d="M4.2 9.2 L7.5 12.8 L13.5 4.8" fill="none" stroke="#111" stroke-width="2.5"/></svg></div>
  <div class="a" style="left:1043px;top:582px;font-size:14px;color:#8e8e8e;font-style:italic;line-height:18px">Aa</div>
  <div class="col" style="top:582px">Marital Status</div>
  <div class="cb" style="left:1017.5px;top:610.0px"><svg width="17" height="17" style="left:-1px;top:-1px"><path d="M4.2 9.2 L7.5 12.8 L13.5 4.8" fill="none" stroke="#111" stroke-width="2.5"/></svg></div>
  <div class="a" style="left:1043px;top:610px;font-size:14px;color:#8e8e8e;font-style:italic;line-height:18px">Aa</div>
  <div class="col" style="top:610px">Gender</div>
  <div class="cb" style="left:1017.5px;top:638.0px"><svg width="17" height="17" style="left:-1px;top:-1px"><path d="M4.2 9.2 L7.5 12.8 L13.5 4.8" fill="none" stroke="#111" stroke-width="2.5"/></svg></div>
  <div class="a" style="left:1046.5px;top:638.5px;font-size:17px;color:#a5a5a5;line-height:18px">#</div>
  <div class="col" style="top:638px">Income</div>
  <div class="cb" style="left:1017.5px;top:667.0px"><svg width="17" height="17" style="left:-1px;top:-1px"><path d="M4.2 9.2 L7.5 12.8 L13.5 4.8" fill="none" stroke="#111" stroke-width="2.5"/></svg></div>
  <div class="a" style="left:1046.5px;top:667.5px;font-size:17px;color:#a5a5a5;line-height:18px">#</div>
  <div class="col" style="top:667px">Children</div>
  <div class="cb" style="left:1017.5px;top:695.0px"><svg width="17" height="17" style="left:-1px;top:-1px"><path d="M4.2 9.2 L7.5 12.8 L13.5 4.8" fill="none" stroke="#111" stroke-width="2.5"/></svg></div>
  <div class="a" style="left:1043px;top:695px;font-size:14px;color:#8e8e8e;font-style:italic;line-height:18px">Aa</div>
  <div class="col" style="top:695px">Education</div>
  <div class="cb" style="left:1017.5px;top:723.0px"><svg width="17" height="17" style="left:-1px;top:-1px"><path d="M4.2 9.2 L7.5 12.8 L13.5 4.8" fill="none" stroke="#111" stroke-width="2.5"/></svg></div>
  <div class="a" style="left:1043px;top:723px;font-size:14px;color:#8e8e8e;font-style:italic;line-height:18px">Aa</div>
  <div class="col" style="top:723px">Occupation</div>
  <div class="cb" style="left:1017.5px;top:751.0px"><svg width="17" height="17" style="left:-1px;top:-1px"><path d="M4.2 9.2 L7.5 12.8 L13.5 4.8" fill="none" stroke="#111" stroke-width="2.5"/></svg></div>
  <div class="a" style="left:1043px;top:751px;font-size:14px;color:#8e8e8e;font-style:italic;line-height:18px">Aa</div>
  <div class="col" style="top:751px">Home Owner</div>
  <div class="cb" style="left:1017.5px;top:780.0px"><svg width="17" height="17" style="left:-1px;top:-1px"><path d="M4.2 9.2 L7.5 12.8 L13.5 4.8" fill="none" stroke="#111" stroke-width="2.5"/></svg></div>
  <div class="a" style="left:1046.5px;top:780.5px;font-size:17px;color:#a5a5a5;line-height:18px">#</div>
  <div class="col" style="top:780px">Cars</div>
  <div class="cb" style="left:1017.5px;top:808.0px"><svg width="17" height="17" style="left:-1px;top:-1px"><path d="M4.2 9.2 L7.5 12.8 L13.5 4.8" fill="none" stroke="#111" stroke-width="2.5"/></svg></div>
  <div class="a" style="left:1043px;top:808px;font-size:14px;color:#8e8e8e;font-style:italic;line-height:18px">Aa</div>
  <div class="col" style="top:808px">Commute Distance</div>
  <div class="cb" style="left:1017.5px;top:836.0px"><svg width="17" height="17" style="left:-1px;top:-1px"><path d="M4.2 9.2 L7.5 12.8 L13.5 4.8" fill="none" stroke="#111" stroke-width="2.5"/></svg></div>
  <div class="a" style="left:1046.5px;top:836.5px;font-size:17px;color:#a5a5a5;line-height:18px">#</div>
  <div class="col" style="top:836px">Age</div>
  <div class="cb" style="left:1017.5px;top:864.0px"><svg width="17" height="17" style="left:-1px;top:-1px"><path d="M4.2 9.2 L7.5 12.8 L13.5 4.8" fill="none" stroke="#111" stroke-width="2.5"/></svg></div>
  <div class="a" style="left:1043px;top:864px;font-size:14px;color:#8e8e8e;font-style:italic;line-height:18px">Aa</div>
  <div class="col" style="top:864px">Purchased Bike</div>

  <!-- tooltip -->
  <div class="a" style="left:1099px;top:583px;width:124px;height:25px;background:#fff;border:1px solid #8a8a8a"></div>
  <div class="a" style="left:1106px;top:588px;font-size:12px;color:#222;line-height:15px;white-space:nowrap">0. profileKey: Integer</div>
  <svg width="20" height="24" style="left:1080px;top:568px"><path d="M6 3 Q6 1 8 1 Q10 1 10 3 V10 Q12 9 13.5 10 Q15.5 10 15.8 11.5 Q17.5 11 18.3 13 V18 Q18 21 15 23 H9 Q7 22 3 16 Q2 14 4 14 L6 15.5 Z" fill="#fff" stroke="#111" stroke-width="1"/><path d="M10 10 V15 M13.5 10.5 V15 M15.8 12 V15" stroke="#111" stroke-width="0.8"/></svg>
  <!-- Set Variable Values -->
  <div class="box" style="top:909px;height:32px"></div>
  <svg width="10" height="16" style="left:1010px;top:916px"><path d="M2 1.5 L8.5 8 L2 14.5" fill="none" stroke="#d0d0d0" stroke-width="1.3"/></svg>
  <div class="a" style="left:1033px;top:914px;font-size:16px;font-style:italic;color:#e8902a;line-height:18px">#</div>
  <div class="a" style="left:1042px;top:922px;font-size:9px;color:#c8c8c8;line-height:10px">@</div>
  <div class="a" style="left:1063px;top:916px;font-size:14px;font-weight:bold;color:#dcdcdc;line-height:16px;white-space:nowrap">Set Variable Values</div>
  <!-- Metadata -->
  <div class="box" style="top:946px;height:34px"></div>
  <svg width="10" height="16" style="left:1010px;top:955px"><path d="M2 1.5 L8.5 8 L2 14.5" fill="none" stroke="#d0d0d0" stroke-width="1.3"/></svg>
  <svg width="22" height="22" style="left:1031px;top:952px"><circle cx="11" cy="11" r="9.3" fill="none" stroke="#5b9ccc" stroke-width="1.4"/><circle cx="11" cy="6.3" r="1.4" fill="#5b9ccc"/><path d="M9 9.5 H11.6 V16 M9 16 H13.5" fill="none" stroke="#5b9ccc" stroke-width="1.6"/></svg>
  <div class="a" style="left:1063px;top:955px;font-size:14px;font-weight:bold;color:#dcdcdc;line-height:16px">Metadata</div>
  <!-- preview -->
  <div class="a" style="left:99px;top:737px;width:877px;height:38px;background:#484848"></div>
  <div class="a" style="left:95px;top:118px;width:4px;height:900px;background:#2a2a2a"></div>
  <!-- preview panel -->
  <div class="a" style="left:109px;top:748px;font-size:14px;font-weight:bold;color:#d8d8d8;line-height:16px">Preview</div>
  <svg width="20" height="16" style="left:894px;top:749px"><path d="M0.8 6.8 C4.5 -0.6 13.5 -0.6 17.2 6.8 C13.5 14.2 4.5 14.2 0.8 6.8 Z" fill="none" stroke="#d8d8d8" stroke-width="1.3"/><circle cx="9" cy="6.8" r="3.2" fill="none" stroke="#d8d8d8" stroke-width="1.3"/></svg>
  <svg width="18" height="18" style="left:921px;top:747px"><path d="M11.9 3.1 L15.2 6.4" stroke="#d0d0d0" stroke-width="2" stroke-linecap="round"/><polygon points="4.4,7.4 10.4,5.6 13,8.2 10.9,13.9" fill="#d0d0d0"/><path d="M8 10.2 L3.2 15.2" stroke="#d0d0d0" stroke-width="1.4" stroke-linecap="round"/></svg>
  <svg width="16" height="10" style="left:950px;top:753px"><path d="M1.5 1.5 L8 8 L14.5 1.5" fill="none" stroke="#cfcfcf" stroke-width="1.4"/></svg>
  <div class="a" style="left:99px;top:775px;width:877px;height:1px;background:#2c2c2c"></div>
  <div class="a" style="left:99px;top:776px;width:877px;height:199px;background:#4b4b4b;overflow:hidden">
    <div class="row" style="top:0;background:#525252"></div>
    <div class="row" style="top:33.0px;height:33px;width:868px;background:#4a4a4a"></div>
    <div class="row" style="top:65.5px;height:33px;width:868px;background:#535353"></div>
    <div class="row" style="top:98.0px;height:33px;width:868px;background:#4a4a4a"></div>
    <div class="row" style="top:130.5px;height:33px;width:868px;background:#535353"></div>
    <div class="row" style="top:163.0px;height:33px;width:868px;background:#4a4a4a"></div>
    <div class="a" style="left:124px;top:0;width:1px;height:33px;background:#222"></div>
    <div class="a" style="left:124px;top:33px;width:1px;height:166px;background:#454545"></div>
    <div class="a" style="left:249px;top:0;width:1px;height:33px;background:#222"></div>
    <div class="a" style="left:249px;top:33px;width:1px;height:166px;background:#454545"></div>
    <div class="a" style="left:374px;top:0;width:1px;height:33px;background:#222"></div>
    <div class="a" style="left:374px;top:33px;width:1px;height:166px;background:#454545"></div>
    <div class="a" style="left:499px;top:0;width:1px;height:33px;background:#222"></div>
    <div class="a" style="left:499px;top:33px;width:1px;height:166px;background:#454545"></div>
    <div class="a" style="left:624px;top:0;width:1px;height:33px;background:#222"></div>
    <div class="a" style="left:624px;top:33px;width:1px;height:166px;background:#454545"></div>
    <div class="a" style="left:749px;top:0;width:1px;height:33px;background:#222"></div>
    <div class="a" style="left:749px;top:33px;width:1px;height:166px;background:#454545"></div>
    <div class="a" style="left:874px;top:0;width:1px;height:33px;background:#333"></div>
    
  </div>
  <svg width="18" height="14" style="left:111px;top:786px"><rect x="0" y="0" width="16" height="2.6" rx="1" fill="#4a8fe0"/><rect x="0" y="3.8" width="13" height="2.6" rx="1" fill="#4a8fe0"/><rect x="0" y="7.6" width="9.5" height="2.6" rx="1" fill="#4a8fe0"/><rect x="0" y="11.4" width="6" height="2.6" rx="1" fill="#4a8fe0"/></svg>
  <div class="hc" style="left:128px;top:784px;width:66px;overflow:hidden">profileKey</div>
  <svg width="18" height="14" style="left:236px;top:786px"><rect x="0" y="0" width="16" height="2.6" rx="1" fill="#4a8fe0"/><rect x="0" y="3.8" width="13" height="2.6" rx="1" fill="#4a8fe0"/><rect x="0" y="7.6" width="9.5" height="2.6" rx="1" fill="#4a8fe0"/><rect x="0" y="11.4" width="6" height="2.6" rx="1" fill="#4a8fe0"/></svg>
  <div class="hc" style="left:253px;top:784px;width:66px;overflow:hidden">Marital Sta</div>
  <svg width="18" height="14" style="left:361px;top:786px"><rect x="0" y="0" width="16" height="2.6" rx="1" fill="#4a8fe0"/><rect x="0" y="3.8" width="13" height="2.6" rx="1" fill="#4a8fe0"/><rect x="0" y="7.6" width="9.5" height="2.6" rx="1" fill="#4a8fe0"/><rect x="0" y="11.4" width="6" height="2.6" rx="1" fill="#4a8fe0"/></svg>
  <div class="hc" style="left:378px;top:784px;width:66px;overflow:hidden">Gender</div>
  <svg width="18" height="14" style="left:486px;top:786px"><rect x="0" y="0" width="16" height="2.6" rx="1" fill="#4a8fe0"/><rect x="0" y="3.8" width="13" height="2.6" rx="1" fill="#4a8fe0"/><rect x="0" y="7.6" width="9.5" height="2.6" rx="1" fill="#4a8fe0"/><rect x="0" y="11.4" width="6" height="2.6" rx="1" fill="#4a8fe0"/></svg>
  <div class="hc" style="left:503px;top:784px;width:66px;overflow:hidden">Income</div>
  <svg width="18" height="14" style="left:611px;top:786px"><rect x="0" y="0" width="16" height="2.6" rx="1" fill="#4a8fe0"/><rect x="0" y="3.8" width="13" height="2.6" rx="1" fill="#4a8fe0"/><rect x="0" y="7.6" width="9.5" height="2.6" rx="1" fill="#4a8fe0"/><rect x="0" y="11.4" width="6" height="2.6" rx="1" fill="#4a8fe0"/></svg>
  <div class="hc" style="left:628px;top:784px;width:66px;overflow:hidden">Children</div>
  <svg width="18" height="14" style="left:736px;top:786px"><rect x="0" y="0" width="16" height="2.6" rx="1" fill="#4a8fe0"/><rect x="0" y="3.8" width="13" height="2.6" rx="1" fill="#4a8fe0"/><rect x="0" y="7.6" width="9.5" height="2.6" rx="1" fill="#4a8fe0"/><rect x="0" y="11.4" width="6" height="2.6" rx="1" fill="#4a8fe0"/></svg>
  <div class="hc" style="left:753px;top:784px;width:66px;overflow:hidden">Education</div>
  <svg width="18" height="14" style="left:861px;top:786px"><rect x="0" y="0" width="16" height="2.6" rx="1" fill="#4a8fe0"/><rect x="0" y="3.8" width="13" height="2.6" rx="1" fill="#4a8fe0"/><rect x="0" y="7.6" width="9.5" height="2.6" rx="1" fill="#4a8fe0"/><rect x="0" y="11.4" width="6" height="2.6" rx="1" fill="#4a8fe0"/></svg>
  <div class="hc" style="left:878px;top:784px;width:66px;overflow:hidden">Occupatic</div>
  <div class="cell" style="left:108.5px;top:817.0px">1</div>
  <div class="cell" style="left:233.5px;top:817.0px">Married</div>
  <div class="cell" style="left:358.5px;top:817.0px">Female</div>
  <div class="cell" style="left:483.5px;top:817.0px">40000</div>
  <div class="cell" style="left:608.5px;top:817.0px">1</div>
  <div class="cell" style="left:733.5px;top:817.0px">Bachelors</div>
  <div class="cell" style="left:858.5px;top:817.0px">Skilled Manual</div>
  <div class="cell" style="left:108.5px;top:849.5px">2</div>
  <div class="cell" style="left:233.5px;top:849.5px">Married</div>
  <div class="cell" style="left:358.5px;top:849.5px">Male</div>
  <div class="cell" style="left:483.5px;top:849.5px">30000</div>
  <div class="cell" style="left:608.5px;top:849.5px">3</div>
  <div class="cell" style="left:733.5px;top:849.5px">Partial College</div>
  <div class="cell" style="left:858.5px;top:849.5px">Clerical</div>
  <div class="cell" style="left:108.5px;top:882.0px">3</div>
  <div class="cell" style="left:233.5px;top:882.0px">Married</div>
  <div class="cell" style="left:358.5px;top:882.0px">Male</div>
  <div class="cell" style="left:483.5px;top:882.0px">80000</div>
  <div class="cell" style="left:608.5px;top:882.0px">5</div>
  <div class="cell" style="left:733.5px;top:882.0px">Partial College</div>
  <div class="cell" style="left:858.5px;top:882.0px">Professional</div>
  <div class="cell" style="left:108.5px;top:914.5px">4</div>
  <div class="cell" style="left:233.5px;top:914.5px">Single</div>
  <div class="cell" style="left:358.5px;top:914.5px">Male</div>
  <div class="cell" style="left:483.5px;top:914.5px">70000</div>
  <div class="cell" style="left:608.5px;top:914.5px">0</div>
  <div class="cell" style="left:733.5px;top:914.5px">Bachelors</div>
  <div class="cell" style="left:858.5px;top:914.5px">Professional</div>
  <div class="cell" style="left:108.5px;top:947.0px">5</div>
  <div class="cell" style="left:233.5px;top:947.0px">Single</div>
  <div class="cell" style="left:358.5px;top:947.0px">Male</div>
  <div class="cell" style="left:483.5px;top:947.0px">30000</div>
  <div class="cell" style="left:608.5px;top:947.0px">0</div>
  <div class="cell" style="left:733.5px;top:947.0px">Bachelors</div>
  <div class="cell" style="left:858.5px;top:947.0px">Clerical</div>

  <!-- scrollbars -->
  <div class="a" style="left:99px;top:969px;width:877px;height:6px;background:#4b4b4b"></div>
  <div class="a" style="left:111px;top:969px;width:488px;height:6px;background:#686868;border-radius:3px"></div>
  <svg width="6" height="8" style="left:102px;top:968px"><polygon points="5,0 5,8 0,4" fill="#666"/></svg>
  <svg width="6" height="8" style="left:958px;top:968px"><polygon points="0,0 0,8 5,4" fill="#666"/></svg>
  <div class="a" style="left:967px;top:824px;width:5px;height:13px;background:#6a6a6a;border-radius:3px"></div>
  <svg width="8" height="6" style="left:966px;top:813px"><polygon points="0,5 8,5 4,0" fill="#666"/></svg>
  <svg width="8" height="6" style="left:966px;top:957px"><polygon points="0,0 8,0 4,5" fill="#666"/></svg>
  <div class="a" style="left:99px;top:975px;width:877px;height:6px;background:#2a2a2a"></div>
  <!-- bottom tabs -->
  <div class="tab" style="left:99px;width:108px;background:#525252"><svg width="16" height="10" style="left:13px;top:18px"><path d="M1.5 1.5 L8 8 L14.5 1.5" fill="none" stroke="#cfcfcf" stroke-width="1.3"/></svg><span class="a" style="left:36px;top:0">Preview</span></div>
  <div class="tab" style="left:210px;width:113px"><svg width="16" height="10" style="left:11px;top:18px"><path d="M1.5 8.5 L8 2 L14.5 8.5" fill="none" stroke="#cfcfcf" stroke-width="1.3"/></svg><span class="a" style="left:34px;top:0">Progress</span></div>
  <div class="tab" style="left:326px;width:95px"><svg width="16" height="10" style="left:11px;top:18px"><path d="M1.5 8.5 L8 2 L14.5 8.5" fill="none" stroke="#cfcfcf" stroke-width="1.3"/></svg><span class="a" style="left:35px;top:0">Errors</span></div>
  <div class="tab" style="left:424px;width:552px"><svg width="16" height="10" style="left:11px;top:18px"><path d="M1.5 8.5 L8 2 L14.5 8.5" fill="none" stroke="#cfcfcf" stroke-width="1.3"/></svg><span class="a" style="left:36px;top:0">Master Flow</span></div>
  <!-- taskbar -->
  <div class="a" style="left:0;top:1022px;width:1427px;height:45px;background:#191919"></div>
  <div class="a" style="left:0;top:1018px;width:1427px;height:4px;background:#2a2a2a"></div>
  <svg width="20" height="16" style="left:16px;top:1038px"><path d="M1 3 H18 M1 8 H18 M1 13 H18" stroke="#dcdcdc" stroke-width="2.2"/></svg>
  <svg width="24" height="24" style="left:57px;top:1034px"><path d="M2 2 H9.5 L11.5 4.5 H21 V19 H2 Z" fill="#cfcfcf"/><circle cx="15" cy="15" r="6" fill="#191919" stroke="#cfcfcf" stroke-width="1.6"/><path d="M10.7 19.3 L7 23" stroke="#cfcfcf" stroke-width="1.8"/><rect x="7" y="14" width="3" height="6" fill="#191919"/></svg>
  <svg width="24" height="22" style="left:95px;top:1035px"><path d="M1.5 2 H10.5 V4 L7.5 8 V13 H4.5 V8 L1.5 4 Z" fill="none" stroke="#cfcfcf" stroke-width="1.3"/><path d="M12.5 2 H21 V16 M1.5 10 V20 H9" fill="none" stroke="#cfcfcf" stroke-width="1.3"/><rect x="10" y="17.5" width="5" height="3" fill="#cfcfcf"/><rect x="16" y="17.5" width="5" height="3" fill="#cfcfcf"/></svg>
  <!-- Discovery tab -->
  <div class="a" style="left:125px;top:1030px;width:139px;height:33px;background:#3e4245;border-radius:0 0 7px 7px;border-bottom:3px solid #2ebd2e"></div>
  <div class="a" style="left:133px;top:1033.5px;font-size:17px;color:#b0b0b0;line-height:18px">*</div>
  <svg width="16" height="16" style="left:145px;top:1035px"><rect x="0" y="2.9" width="3.6" height="11.1" fill="#2ebd2e"/><rect x="5" y="5.8" width="3.8" height="8.2" fill="#2ebd2e"/><rect x="10.2" y="1" width="3.8" height="13" fill="#2ebd2e"/></svg>
  <div class="a" style="left:165px;top:1034px;font-size:14.3px;color:#a9a9a9;line-height:17px">Discovery1</div>
  <!-- Model1 tab -->
  <div class="a" style="left:0;top:1022px;width:272px;height:4px;background:#f8c12c"></div>
  <div class="a" style="left:268px;top:1022px;width:128px;height:41px;background:#242424;border:4px solid #f8c12c;border-top:none;border-radius:0 0 8px 8px"></div>
  <div class="a" style="left:392px;top:1022px;width:1035px;height:4px;background:#f8c12c"></div>
  <div class="a" style="left:279px;top:1033px;font-size:17px;color:#f0f0f0;line-height:18px;font-weight:bold">*</div>
  <svg width="14" height="14" style="left:291.5px;top:1036.5px"><ellipse cx="6.2" cy="2.6" rx="5.8" ry="2.3" fill="#f3bd2a"/><path d="M0.4 4.6 Q6.2 8 12 4.6 V6.6 Q6.2 10 0.4 6.6 Z M0.4 8.2 Q6.2 11.6 12 8.2 V9.4 Q6.2 12.8 0.4 9.4 Z" fill="#f3bd2a"/></svg>
  <div class="a" style="left:311.5px;top:1033px;font-size:15.3px;font-weight:bold;color:#f0f0f0;line-height:18px">Model1</div>
  <svg width="14" height="10" style="left:374px;top:1039px"><polygon points="0.5,1 12.5,1 6.5,8.5" fill="#f0f0f0"/></svg>
  <svg width="18" height="18" style="left:412px;top:1037px"><path d="M8.5 1 V16 M1 8.5 H16" stroke="#e0e0e0" stroke-width="2"/></svg>
  <!-- right tray -->
  <svg width="24" height="24" style="left:1289px;top:1034px"><g transform="translate(-1289,-1034)" fill="none" stroke-width="1.2">
    <path d="M1301.5 1036.8 L1311 1050 L1301.5 1055.5 Z" stroke="#8a8a8a"/>
    <path d="M1303.6 1041 V1053.3 M1305.8 1044 V1052.2" stroke="#6a6a6a" stroke-width="1"/>
    <path d="M1301.5 1036.8 L1291 1049.5 L1301.5 1055.5" stroke="#5a5a5a"/>
    <path d="M1292.8 1050.5 L1300.5 1041.5 M1295 1052 L1300.8 1045 M1297.5 1053.5 L1301 1049" stroke="#5e5e5e" stroke-width="1"/>
  </g></svg>
  <div class="a" style="left:1323px;top:1036px;width:20px;height:20px;border-radius:50%;background:#e8281e;color:#fff;font-size:13px;font-weight:bold;line-height:20px;text-align:center">4</div>
  <svg width="24" height="24" style="left:1345px;top:1034px"><g transform="translate(-1345,-1034)" fill="none" stroke="#e2e2e2" stroke-width="1.3" stroke-linejoin="round">
    <path d="M1353.2 1037.5 L1346.8 1042.8 L1349.6 1043.4 L1352.5 1048.2 L1352.4 1052 L1359.8 1045.6 L1355.8 1044.6 L1352.6 1040.8 Z"/>
    <path d="M1356 1048.2 L1364.6 1055.6"/>
  </g></svg>
  <svg width="10" height="8" style="left:1375px;top:1042px"><polygon points="0.5,0.5 9,0.5 4.75,7" fill="#d8d8d8"/></svg>
  <svg width="22" height="22" style="left:1395px;top:1035px"><path d="M11 11 Q11 9 13 9.5 Q15 10.5 14.5 13 Q13.5 16 10 16 Q6 15.5 6 11 Q6.5 6 11.5 5.5 Q17 5.5 18 11 Q18.5 17 12.5 19.5 Q5.5 21 2.5 14.5 Q1 8 5 4.5 Q8 1.5 13 2" fill="none" stroke="#d0d0d0" stroke-width="1.5"/></svg>
</div>

<!-- annotations -->
<svg width="1438" height="1067" style="left:0;top:0">
  <defs>
    <filter id="sh" x="-50%" y="-50%" width="200%" height="200%"><feGaussianBlur in="SourceAlpha" stdDeviation="2.2"/><feOffset dx="-1" dy="4"/><feComponentTransfer><feFuncA type="linear" slope="0.75"/></feComponentTransfer><feMerge><feMergeNode/><feMergeNode in="SourceGraphic"/></feMerge></filter>
  </defs>
  <filter id="bs" x="-10%" y="-10%" width="120%" height="120%"><feGaussianBlur in="SourceAlpha" stdDeviation="2.5"/><feOffset dx="1.5" dy="1"/><feComponentTransfer><feFuncA type="linear" slope="0.4"/></feComponentTransfer><feMerge><feMergeNode/><feMergeNode in="SourceGraphic"/></feMerge></filter>
  <rect x="89.5" y="730.5" width="895" height="301" fill="none" stroke="#d27cae" stroke-width="3" filter="url(#bs)"/>
  <rect x="986.5" y="440.5" width="433" height="467.5" fill="none" stroke="#00a272" stroke-width="3" filter="url(#bs)"/>
  <polygon points="1427,306.5 1432,302 1438,302 1438,320.5 1427,332" fill="#000"/>
  <polygon points="1427,370 1432,366 1438,366 1438,384 1427,395" fill="#000"/>
  <polygon points="1427,866 1432,862 1438,862 1438,880 1427,892" fill="#000"/>
  <g filter="url(#sh)">
    <path d="M627.7 163 L577 203.5" stroke="#000" stroke-width="3.6" stroke-linecap="round"/>
    <polygon points="566.7,213.1 576.6,195.8 580.5,203.8 587.2,208.3" fill="#000" stroke="#000" stroke-width="1.2" stroke-linejoin="round"/>
  </g>
  <g filter="url(#sh)">
    <path d="M1440 303.5 L1390 357" stroke="#d9620c" stroke-width="4.2"/>
    <polygon points="1382.5,364.2 1387,345.3 1393,352.5 1402.3,356.8" fill="#d9620c"/>
  </g>
  <g filter="url(#sh)">
    <path d="M1440 367 L1390 420.5" stroke="#eee13e" stroke-width="4.2"/>
    <polygon points="1382.5,428 1387,409.5 1393,416.5 1402.3,420.8" fill="#eee13e"/>
  </g>
  <g filter="url(#sh)">
    <path d="M1440 862.5 L1390 917.5" stroke="#55b2e8" stroke-width="4.2"/>
    <polygon points="1382,925.2 1388.8,904.6 1393,912.5 1402.3,916.8" fill="#55b2e8"/>
  </g>
</svg>
</body></html>
